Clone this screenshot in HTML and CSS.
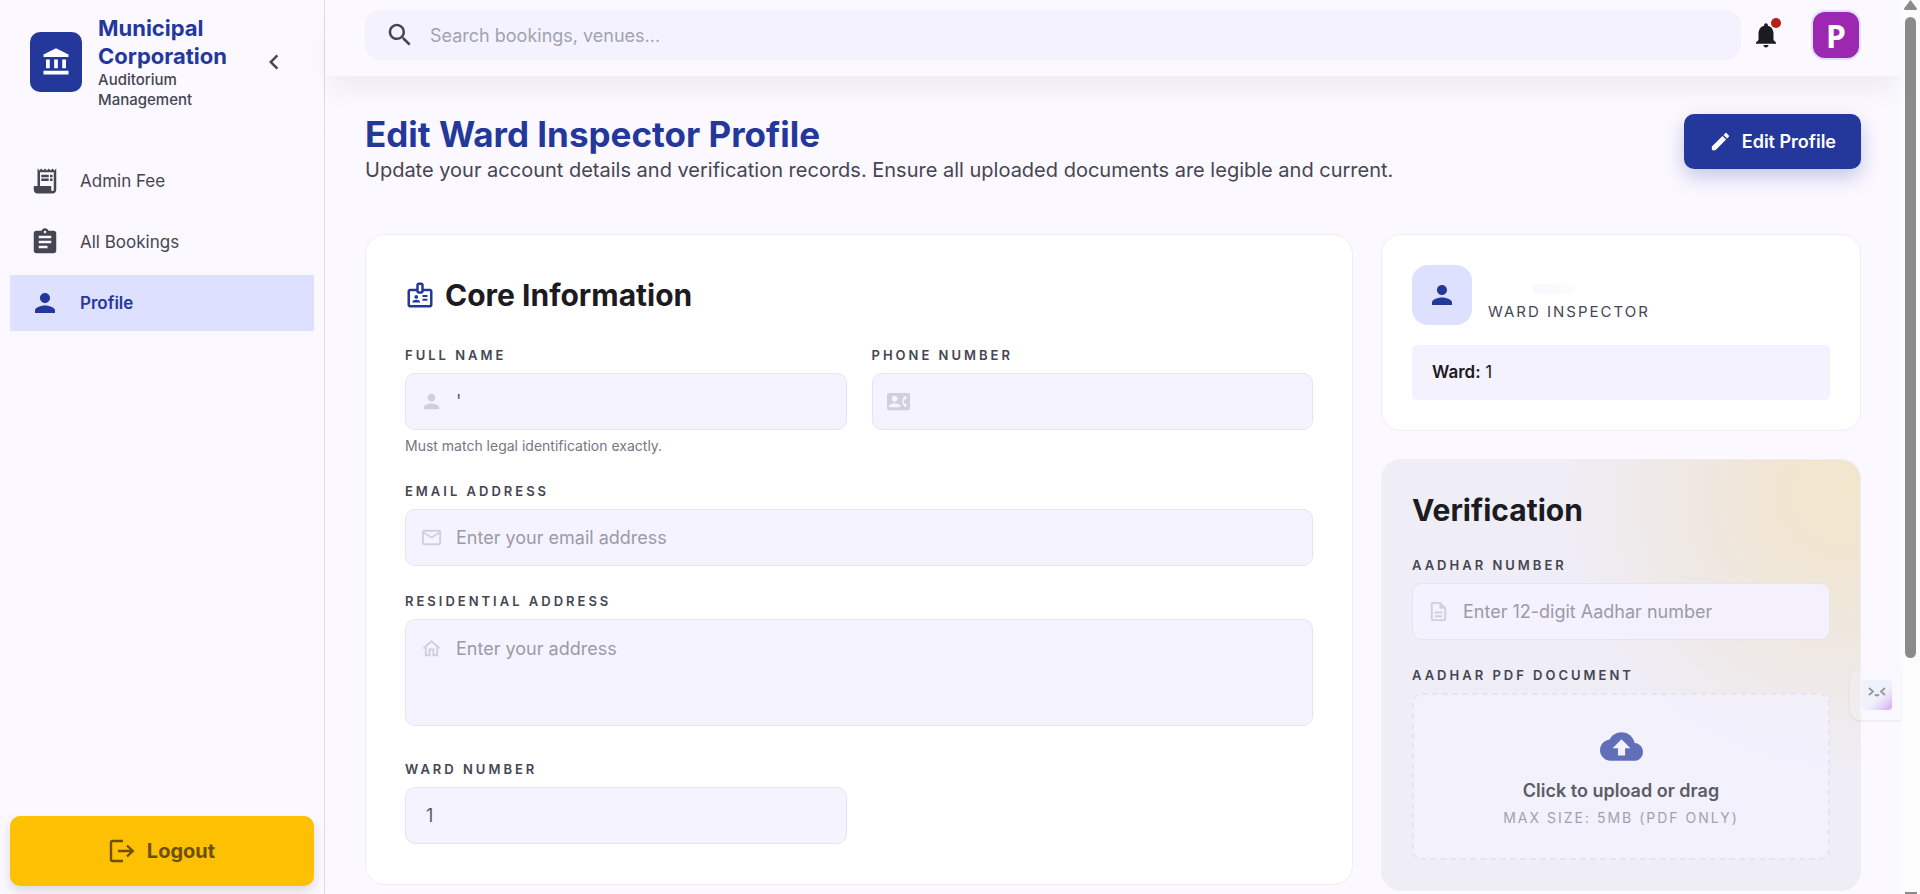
FILE: index.html
```html
<!DOCTYPE html>
<html lang="en">
<head>
    <meta charset="UTF-8">
    <meta name="viewport" content="width=device-width, initial-scale=1.0">
    <title>Edit Ward Inspector Profile</title>
    <link rel="stylesheet" href="styles.css">
</head>
<body>
    <!-- Sidebar -->
    <aside class="sidebar">
        <div class="brand">
            <div class="brand-logo">
                <svg class="icon" viewBox="0 0 24 24"><path d="M4 10h3v7H4zM10.5 10h3v7h-3zM2 19h20v3H2zM17 10h3v7h-3zM12 1L2 6v2h20V6z"/></svg>
            </div>
            <div class="brand-text">
                <div class="brand-name">Municipal Corporation</div>
                <div class="brand-sub">Auditorium Management</div>
            </div>
            <button class="collapse-btn" type="button" aria-label="Collapse sidebar">
                <svg class="icon" viewBox="0 0 24 24"><path d="M15.41 7.41L14 6l-6 6 6 6 1.41-1.41L10.83 12z"/></svg>
            </button>
        </div>

        <nav class="nav">
            <a href="#" class="nav-link">
                <svg class="icon" viewBox="0 0 24 24"><path d="M19.5 3.5L18 2l-1.500 1.500L15 2l-1.500 1.500L12 2l-1.500 1.500L9 2 7.500 3.500 6 2v14H3v3c0 1.660 1.340 3 3 3h12c1.660 0 3-1.340 3-3V2l-1.500 1.500zM19 19c0 .55-.45 1-1 1s-1-.45-1-1v-3H8V5h11v14z"/><path d="M9 7h6v2H9zM16 7h2v2h-2zM9 10h6v2H9zM16 10h2v2h-2z"/></svg>
                <span>Admin Fee</span>
            </a>
            <a href="#" class="nav-link">
                <svg class="icon" viewBox="0 0 24 24"><path d="M19 3h-4.180C14.400 1.840 13.300 1 12 1c-1.300 0-2.400.84-2.820 2H5c-1.100 0-2 .9-2 2v14c0 1.100.9 2 2 2h14c1.100 0 2-.9 2-2V5c0-1.100-.9-2-2-2zm-7 0c.55 0 1 .45 1 1s-.45 1-1 1-1-.45-1-1 .45-1 1-1zm2 14H7v-2h7v2zm3-4H7v-2h10v2zm0-4H7V7h10v2z"/></svg>
                <span>All Bookings</span>
            </a>
            <a href="#" class="nav-link active">
                <svg class="icon" viewBox="0 0 24 24"><path d="M12 12c2.210 0 4-1.790 4-4s-1.790-4-4-4-4 1.790-4 4 1.790 4 4 4zm0 2c-2.670 0-8 1.340-8 4v2h16v-2c0-2.660-5.330-4-8-4z"/></svg>
                <span>Profile</span>
            </a>
        </nav>

        <button class="logout-btn" type="button">
            <svg class="logout-icon" viewBox="0 0 26 24"><path d="M14 2H3.500Q2 2 2 3.500v17Q2 22 3.500 22H14M9 12h15M18 6.500l5.800 5.500L18 17.500" fill="none" stroke="currentColor" stroke-width="2.400"/></svg>
            Logout
        </button>
    </aside>

    <div class="page">
        <!-- Top bar -->
        <header class="topbar">
            <label class="search">
                <svg class="icon" viewBox="0 0 24 24"><path d="M15.500 14h-.79l-.28-.27C15.410 12.590 16 11.110 16 9.500 16 5.910 13.090 3 9.500 3S3 5.910 3 9.500 5.910 16 9.500 16c1.610 0 3.090-.59 4.230-1.570l.27.28v.79l5 4.990L20.490 19l-4.990-5zm-6 0C7.010 14 5 11.990 5 9.500S7.010 5 9.500 5 14 7.010 14 9.500 11.990 14 9.500 14z"/></svg>
                <input type="text" placeholder="Search bookings, venues..." aria-label="Search">
            </label>
            <button class="bell" type="button" aria-label="Notifications">
                <svg class="icon" viewBox="0 0 24 24"><path d="M12 22c1.100 0 2-.9 2-2h-4c0 1.100.89 2 2 2zm6-6v-5c0-3.070-1.640-5.640-4.500-6.320V4c0-.83-.67-1.500-1.500-1.500s-1.500.67-1.500 1.500v.68C7.630 5.360 6 7.920 6 11v5l-2 2v1h16v-1l-2-2z"/></svg>
                <span class="bell-dot"></span>
            </button>
            <div class="avatar">P</div>
        </header>

        <main class="content">
            <div class="page-head">
                <div>
                    <h1>Edit Ward Inspector Profile</h1>
                    <p>Update your account details and verification records. Ensure all uploaded documents are legible and current.</p>
                </div>
                <button class="edit-btn" type="button">
                    <svg viewBox="0 0 24 24"><path d="M3 17.250V21h3.750L17.810 9.940l-3.750-3.750L3 17.250zM20.710 7.040c.39-.39.39-1.020 0-1.410l-2.340-2.340c-.39-.39-1.020-.39-1.410 0l-1.830 1.830 3.750 3.750 1.830-1.830z"/></svg>
                    Edit Profile
                </button>
            </div>

            <div class="columns">
                <!-- Core information -->
                <form class="card core">
                    <h2>
                        <svg class="icon" viewBox="0 0 24 24"><path d="M20 7h-5V4c0-1.100-.9-2-2-2h-2c-1.100 0-2 .9-2 2v3H4c-1.100 0-2 .9-2 2v11c0 1.100.9 2 2 2h16c1.100 0 2-.9 2-2V9c0-1.100-.9-2-2-2zm-9-3h2v5h-2V4zm9 16H4V9h5c0 1.100.9 2 2 2h2c1.100 0 2-.9 2-2h5v11z"/><circle cx="9" cy="13.500" r="1.500"/><path d="M11.080 16.180C10.440 15.900 9.740 15.750 9 15.750s-1.440.15-2.080.43c-.56.240-.92.790-.92 1.390V18h6v-.43c0-.6-.36-1.150-.92-1.390zM14 15h4v1.500h-4zM14 12h4v1.500h-4z"/></svg>
                        Core Information
                    </h2>
                    <div class="field-grid">
                        <div class="field">
                            <label for="fullName">FULL NAME</label>
                            <div class="control">
                                <svg viewBox="0 0 24 24"><path d="M12 12c2.210 0 4-1.790 4-4s-1.790-4-4-4-4 1.790-4 4 1.790 4 4 4zm0 2c-2.670 0-8 1.340-8 4v2h16v-2c0-2.660-5.330-4-8-4z"/></svg>
                                <input type="text" id="fullName" value="'">
                            </div>
                            <small>Must match legal identification exactly.</small>
                        </div>
                        <div class="field">
                            <label for="phone">PHONE NUMBER</label>
                            <div class="control">
                                <svg viewBox="0 0 24 24"><path d="M22 3H2C.9 3 0 3.900 0 5v14c0 1.100.9 2 2 2h20c1.100 0 1.990-.9 1.990-2L24 5c0-1.100-.9-2-2-2zM8 6c1.660 0 3 1.340 3 3s-1.340 3-3 3-3-1.340-3-3 1.340-3 3-3zm6 12H2v-1c0-2 4-3.100 6-3.100s6 1.100 6 3.100v1zm3.850-4h1.640L21 16l-1.990 1.990c-1.310-.98-2.280-2.370-2.730-3.990-.18-.64-.28-1.310-.28-2s.1-1.360.28-2c.45-1.620 1.420-3.010 2.730-3.990L21 8l-1.510 2h-1.640c-.22.63-.35 1.300-.35 2s.13 1.370.35 2z"/></svg>
                                <input type="tel" id="phone">
                            </div>
                        </div>
                        <div class="field wide">
                            <label for="email">EMAIL ADDRESS</label>
                            <div class="control">
                                <svg viewBox="0 0 24 24"><path d="M22 6c0-1.100-.9-2-2-2H4c-1.100 0-2 .9-2 2v12c0 1.100.9 2 2 2h16c1.100 0 2-.9 2-2V6zm-2 0l-8 5-8-5h16zm0 12H4V8l8 5 8-5v10z"/></svg>
                                <input type="email" id="email" placeholder="Enter your email address">
                            </div>
                        </div>
                        <div class="field wide">
                            <label for="address">RESIDENTIAL ADDRESS</label>
                            <div class="control area">
                                <svg viewBox="0 0 24 24"><path d="M12 5.690l5 4.500V18h-2v-6H9v6H7v-7.810l5-4.500M12 3L2 12h3v8h6v-6h2v6h6v-8h3L12 3z"/></svg>
                                <textarea id="address" placeholder="Enter your address"></textarea>
                            </div>
                        </div>
                        <div class="field">
                            <label for="ward">WARD NUMBER</label>
                            <div class="control">
                                <input type="text" id="ward" value="1">
                            </div>
                        </div>
                    </div>
                </form>

                <div class="side">
                    <!-- Inspector summary -->
                    <section class="card summary">
                        <div class="person">
                            <div class="person-icon">
                                <svg class="icon" viewBox="0 0 24 24"><path d="M12 12c2.210 0 4-1.790 4-4s-1.790-4-4-4-4 1.790-4 4 1.790 4 4 4zm0 2c-2.670 0-8 1.340-8 4v2h16v-2c0-2.660-5.330-4-8-4z"/></svg>
                            </div>
                            <div>
                                <div class="person-name"><span class="smudge"></span></div>
                                <div class="person-role">WARD INSPECTOR</div>
                            </div>
                        </div>
                        <div class="ward-box"><strong>Ward:</strong> 1</div>
                    </section>

                    <!-- Verification -->
                    <section class="card verification">
                        <h2>Verification</h2>
                        <div class="field">
                            <label for="aadhar">AADHAR NUMBER</label>
                            <div class="control">
                                <svg viewBox="0 0 24 24"><path d="M8 16h8v2H8zm0-4h8v2H8zm6-10H6c-1.100 0-2 .9-2 2v16c0 1.100.89 2 1.990 2H18c1.100 0 2-.9 2-2V8l-6-6zm4 18H6V4h7v5h5v11z"/></svg>
                                <input type="text" id="aadhar" placeholder="Enter 12-digit Aadhar number">
                            </div>
                        </div>
                        <div class="field">
                            <label for="aadharPdf">AADHAR PDF DOCUMENT</label>
                            <label class="dropzone" for="aadharPdf">
                                <svg viewBox="0 0 24 24"><path d="M19.350 10.040C18.670 6.590 15.640 4 12 4 9.110 4 6.600 5.640 5.350 8.040 2.340 8.360 0 10.910 0 14c0 3.310 2.690 6 6 6h13c2.760 0 5-2.240 5-5 0-2.640-2.050-4.780-4.650-4.960zM14 13v4h-4v-4H7l5-5 5 5h-3z"/></svg>
                                <span class="drop-title">Click to upload or drag</span>
                                <span class="drop-note">MAX SIZE: 5MB (PDF ONLY)</span>
                            </label>
                            <input type="file" id="aadharPdf" accept="application/pdf" hidden>
                        </div>
                    </section>
                </div>
            </div>
        </main>

        <!-- Assistant tab on the right edge -->
        <div class="assistant">
            <div class="assistant-face">
                <svg viewBox="0 0 18 10"><path d="M1 1l4 3.500L1 8M17 1l-4 3.500L17 8M7 7.500q2 2 4 0" fill="none" stroke="currentColor" stroke-width="1.800"/></svg>
            </div>
        </div>
    </div>

    <div class="scrollbar">
        <svg viewBox="0 0 13 10"><path d="M6.500 0L13 8.500Q13 10 11.500 10h-10Q0 10 0 8.500z"/></svg>
        <div class="scroll-thumb"></div>
        <div class="scroll-end"></div>
    </div>
</body>
</html>
```
FILE: styles.css
```css
* {
    box-sizing: border-box;
}

body {
    font-family: Inter, "Liberation Sans", sans-serif;
    font-size: 17px;
    background-color: #fbf8ff;
    color: #1b1b21;
    margin: 0;
    height: 100vh;
    display: flex;
    overflow: hidden;
}

h1, h2, p {
    margin: 0;
}

button, input, textarea {
    font-family: inherit;
    font-size: inherit;
    color: inherit;
    border: none;
    background: none;
    padding: 0;
    margin: 0;
    outline: none;
}

button {
    cursor: pointer;
}

svg {
    fill: currentColor;
    flex-shrink: 0;
    display: block;
}

.icon {
    width: 30px;
    height: 30px;
}

/* Sidebar */
.sidebar {
    width: 325px;
    flex-shrink: 0;
    border-right: 1px solid #dcdae4;
    display: flex;
    flex-direction: column;
    padding-bottom: 8px;
}

.brand {
    display: flex;
    align-items: center;
    gap: 16px;
    padding: 14px 30px 21px;
    border-bottom: 1px solid #f8f6fc;
}

.brand-logo {
    width: 52px;
    height: 60px;
    flex-shrink: 0;
    border-radius: 10px;
    background-color: #24389c;
    color: white;
    display: flex;
    align-items: center;
    justify-content: center;
}

.brand-text {
    flex: 1;
}

.brand-name {
    font-size: 22px;
    line-height: 28px;
    font-weight: 700;
    color: #24389c;
}

.brand-sub {
    font-size: 15px;
    line-height: 20px;
    font-weight: 500;
    color: #454652;
}

.collapse-btn {
    padding: 5px;
    color: #454652;
}

.nav {
    flex: 1;
    display: flex;
    flex-direction: column;
    gap: 5px;
    padding: 21px 10px;
}

.nav-link {
    height: 56px;
    display: flex;
    align-items: center;
    gap: 20px;
    padding: 0 20px;
    color: #454652;
    text-decoration: none;
}

.nav-link.active {
    background-color: #dee0ff;
    color: #24389c;
    font-weight: 600;
}

.logout-btn {
    height: 70px;
    margin: 0 10px;
    border-radius: 10px;
    background-color: #fdc003;
    color: #6c5000;
    font-size: 20px;
    font-weight: 700;
    display: flex;
    align-items: center;
    justify-content: center;
    gap: 12px;
    box-shadow: 0 6px 12px rgba(0, 0, 0, 0.12);
}

.logout-icon {
    width: 26px;
    height: 24px;
}

/* Top bar */
.page {
    flex: 1;
    min-width: 0;
    position: relative;
}

.topbar {
    display: flex;
    align-items: center;
    padding: 10px 40px 16px;
    box-shadow: 0 20px 25px -5px rgba(0, 0, 0, 0.05);
}

.search {
    flex: 1;
    height: 50px;
    display: flex;
    align-items: center;
    gap: 15px;
    padding: 0 20px;
    border-radius: 16px;
    background-color: #f4f2fe;
    color: #454652;
    font-size: 18px;
}

.search input {
    flex: 1;
}

.search input::placeholder {
    color: #9fa3af;
}

.bell {
    position: relative;
    margin: 0 30px 0 10px;
    color: #1b1b21;
}

.bell-dot {
    position: absolute;
    top: -2px;
    right: 0;
    width: 10px;
    height: 10px;
    border-radius: 50%;
    background-color: #ba1a1a;
}

.avatar {
    width: 50px;
    height: 50px;
    border-radius: 14px;
    border: 2px solid #dee0ff;
    background-color: #9c27b0;
    color: white;
    font-family: "Noto Sans", sans-serif;
    font-size: 32px;
    font-weight: 700;
    display: flex;
    align-items: center;
    justify-content: center;
}

/* Content */
.content {
    padding: 38px 40px;
}

.page-head {
    display: flex;
    justify-content: space-between;
    align-items: flex-start;
    margin-bottom: 49px;
}

h1 {
    font-size: 35px;
    line-height: 41px;
    color: #24389c;
}

.page-head p {
    font-size: 20px;
    line-height: 30px;
    color: #454652;
}

.edit-btn {
    height: 55px;
    padding: 0 25px;
    border-radius: 10px;
    background-color: #24389c;
    color: white;
    font-size: 18px;
    font-weight: 600;
    display: flex;
    align-items: center;
    gap: 10px;
    box-shadow: 0 8px 20px rgba(36, 56, 156, 0.25);
}

.edit-btn svg {
    width: 23px;
    height: 23px;
}

.columns {
    display: grid;
    grid-template-columns: minmax(0, 1fr) 480px;
    gap: 28px;
    align-items: start;
}

.card {
    background-color: white;
    border: 1px solid #efedf6;
    border-radius: 20px;
}

.core {
    padding: 40px 39px;
}

h2 {
    font-size: 30px;
    line-height: 40px;
    font-weight: 700;
}

.core h2 {
    display: flex;
    align-items: center;
    gap: 10px;
}

.core h2 svg {
    color: #24389c;
}

.field-grid {
    display: grid;
    grid-template-columns: 1fr 1fr;
    gap: 25px;
    margin-top: 30px;
}

.wide {
    grid-column: 1 / -1;
}

.field {
    display: flex;
    flex-direction: column;
}

.field label:first-child {
    font-size: 13px;
    line-height: 20px;
    font-weight: 600;
    letter-spacing: 3px;
    color: #454652;
    margin-bottom: 8px;
}

.field small {
    font-size: 14px;
    line-height: 20px;
    color: #767683;
    margin-top: 6px;
}

.control {
    height: 57px;
    display: flex;
    align-items: center;
    gap: 13px;
    padding: 0 14px;
    border: 1px solid #e6e4f0;
    border-radius: 10px;
    background-color: rgba(244, 242, 255, 0.9);
    color: #5b5c66;
    font-size: 18px;
}

.control svg {
    width: 23px;
    height: 23px;
    color: #d1cfdb;
}

.control input,
.control textarea {
    flex: 1;
    min-width: 0;
}

.control input:only-child {
    padding-left: 6px;
}

.control ::placeholder {
    color: #9c9aa6;
}

.control.area {
    height: 107px;
    align-items: flex-start;
    padding-top: 17px;
    margin-bottom: 8px;
}

.control textarea {
    height: 80px;
    line-height: 24px;
    resize: none;
}

/* Right column */
.side {
    display: flex;
    flex-direction: column;
    gap: 28px;
}

.summary {
    padding: 30px;
}

.person {
    display: flex;
    align-items: center;
    gap: 16px;
    margin-bottom: 20px;
}

.person-icon {
    width: 60px;
    height: 60px;
    border-radius: 16px;
    background-color: #dee0ff;
    color: #24389c;
    display: flex;
    align-items: center;
    justify-content: center;
}

.person-name {
    height: 34px;
    padding: 18px 0 0 45px;
}

.smudge {
    display: block;
    width: 42px;
    height: 10px;
    border-radius: 5px;
    background: linear-gradient(90deg, #faf8fe, #fcfbff);
}

.person-role {
    font-size: 15px;
    line-height: 24px;
    letter-spacing: 2px;
    color: #454652;
}

.ward-box {
    height: 55px;
    padding: 0 20px;
    border-radius: 5px;
    background-color: #f4f2fe;
    line-height: 55px;
}

.ward-box strong {
    font-weight: 600;
}

.verification {
    padding: 30px;
    background: radial-gradient(circle at 96% 8%, #f2e6cd 0, #f1e5d1 60px, #efe8e2 150px, #efedf6 280px);
    display: flex;
    flex-direction: column;
    gap: 25px;
}

.dropzone {
    height: 167px;
    display: flex;
    flex-direction: column;
    align-items: center;
    padding-top: 30px;
    border: 2px dashed #e6e4ee;
    border-radius: 10px;
    background-color: rgba(244, 242, 255, 0.7);
}

.dropzone svg {
    width: 43px;
    height: 43px;
    color: #616fb9;
}

.drop-title {
    font-size: 18px;
    line-height: 24px;
    font-weight: 600;
    color: #5b5c66;
    margin-top: 11px;
}

.drop-note {
    font-size: 14px;
    line-height: 20px;
    letter-spacing: 2px;
    color: #a3a2ac;
    margin-top: 5px;
}

/* Assistant tab */
.assistant {
    position: absolute;
    top: 669px;
    right: 0;
    width: 51px;
    height: 51px;
    padding: 11px 12px;
    border-radius: 10px 0 0 10px;
    background-color: rgba(251, 248, 255, 0.2);
    box-shadow: 0 1px 3px rgba(0, 0, 0, 0.08);
}

.assistant-face {
    width: 30px;
    height: 30px;
    border-radius: 4px;
    background: linear-gradient(135deg, #eff2fb 55%, #e6d9f6 75%, #cda6ee);
    color: #94969f;
    padding: 7px 6px;
}

.assistant-face svg {
    width: 18px;
    height: 10px;
}

/* Scrollbar */
.scrollbar {
    width: 19px;
    flex-shrink: 0;
    padding: 0 3px;
    background-color: #fcfcfc;
    color: #8b8b8b;
    display: flex;
    flex-direction: column;
    align-items: center;
}

.scrollbar svg {
    width: 13px;
    height: 10px;
}

.scroll-thumb {
    width: 11px;
    height: 641px;
    margin-top: 7px;
    border-radius: 6px;
    background-color: #8b8b8b;
}

.scroll-end {
    width: 12px;
    height: 2px;
    margin-top: auto;
    background-color: #8b8b8b;
}
```
